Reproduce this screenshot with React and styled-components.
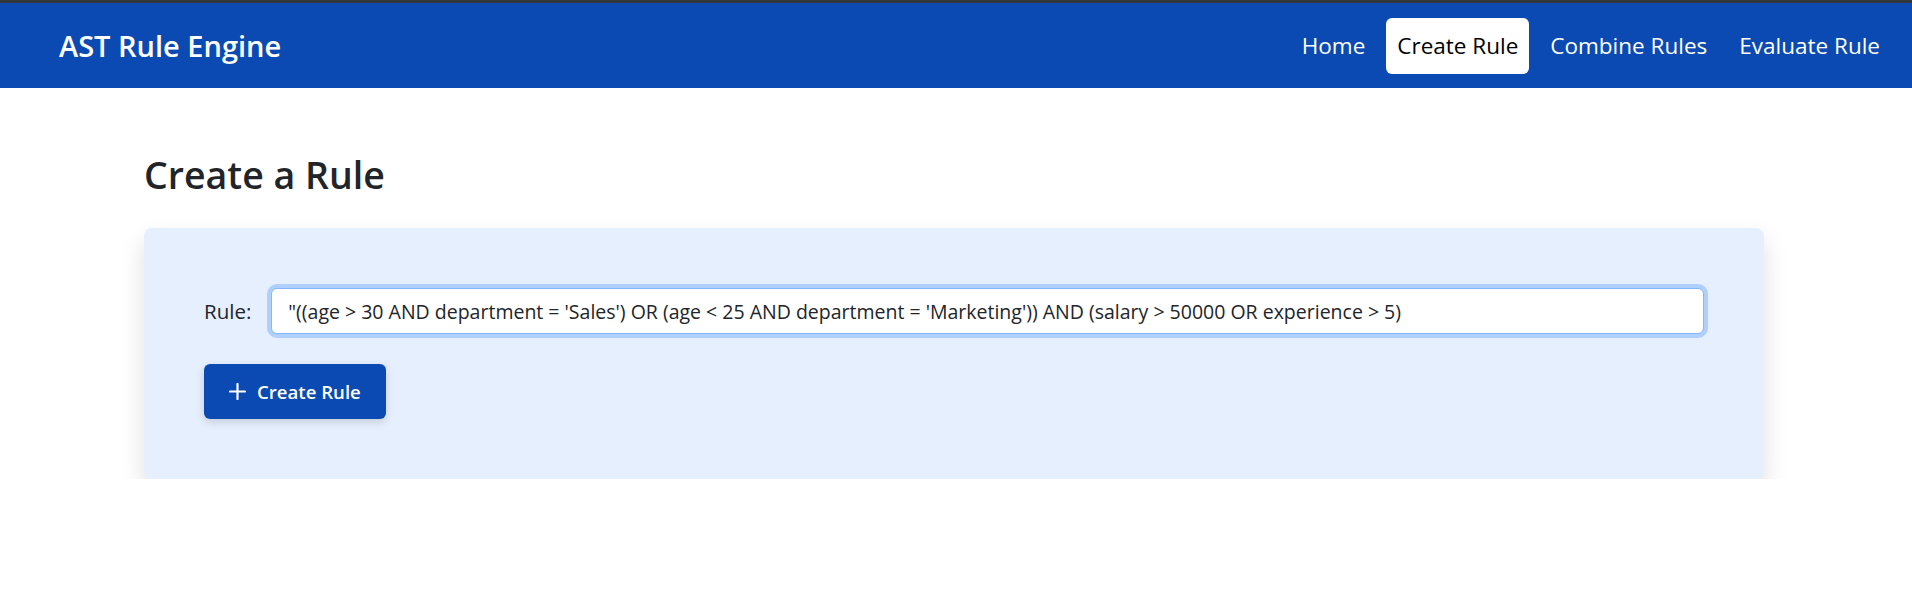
import React, { useEffect, useRef } from "react";
import styled, { createGlobalStyle } from "styled-components";

const GlobalStyle = createGlobalStyle`
  html, body { margin: 0; padding: 0; background: #ffffff; }
  body {
    font-family: "Open Sans", "Noto Sans", sans-serif;
    color: #212529;
  }
  * { box-sizing: border-box; }
`;

const BLUE = "#0b4ab3";

const NavBar = styled.header`
  display: flex;
  align-items: center;
  justify-content: space-between;
  height: 88px;
  border-top: 3px solid #33373d;
  background: ${BLUE};
  padding: 0 21px 0 59px;
`;

const Brand = styled.div`
  color: #ffffff;
  font-size: 29px;
  font-weight: 600;
`;

const NavList = styled.nav`
  display: flex;
  align-items: center;
  gap: 10px;
`;

const NavLink = styled.a`
  display: block;
  height: 56px;
  line-height: 56px;
  padding: 0 11px;
  border-radius: 6px;
  font-size: 22.5px;
  text-decoration: none;
  cursor: pointer;
  color: ${(p) => (p.$active ? "#000000" : "#ffffff")};
  background: ${(p) => (p.$active ? "#ffffff" : "transparent")};
`;

const Main = styled.main`
  margin: 0 148px 0 144px;
`;

const Title = styled.h1`
  margin: 64px 0 31px;
  font-size: 37.5px;
  line-height: 1.2;
  font-weight: 600;
  color: #212529;
`;

const Card = styled.section`
  background: #e6effd;
  border-radius: 8px;
  padding: 60px;
  box-shadow: 0 12px 24px rgba(0, 0, 0, 0.13);
`;

const FormRow = styled.div`
  display: flex;
  align-items: center;
  gap: 20px;
`;

const Label = styled.label`
  font-size: 20.5px;
  color: #212529;
`;

const RuleInput = styled.input`
  flex: 1;
  height: 46px;
  padding: 0 16px;
  font-family: inherit;
  font-size: 19.5px;
  color: #212529;
  background: #ffffff;
  border: 1px solid #86b7fe;
  border-radius: 6px;
  box-shadow: 0 0 0 4px rgba(13, 110, 253, 0.25);
  outline: none;
  caret-color: #000;
`;

const PrimaryButton = styled.button`
  display: flex;
  align-items: center;
  gap: 11px;
  margin-top: 30px;
  height: 55px;
  padding: 0 25px;
  border: none;
  border-radius: 6px;
  background: ${BLUE};
  color: #ffffff;
  font-family: inherit;
  font-size: 18.6px;
  font-weight: 600;
  box-shadow: 0 3px 8px rgba(0, 0, 0, 0.15);
  cursor: pointer;
`;

const PlusIcon = () => (
  <svg width="17" height="17" viewBox="0 0 17 17" fill="none" aria-hidden="true">
    <path d="M8.5 1v15M1 8.5h15" stroke="#ffffff" strokeWidth="2.2" strokeLinecap="round" />
  </svg>
);

const RULE =
  "\"((age > 30 AND department = 'Sales') OR (age < 25 AND department = 'Marketing')) AND (salary > 50000 OR experience > 5)";

export default function App() {
  const ref = useRef(null);
  useEffect(() => {
    const el = ref.current;
    if (el) {
      el.focus();
      el.setSelectionRange(RULE.length, RULE.length);
    }
  }, []);

  const links = ["Home", "Create Rule", "Combine Rules", "Evaluate Rule"];

  return (
    <>
      <GlobalStyle />
      <NavBar>
        <Brand>AST Rule Engine</Brand>
        <NavList>
          {links.map((l) => (
            <NavLink key={l} $active={l === "Create Rule"}>
              {l}
            </NavLink>
          ))}
        </NavList>
      </NavBar>
      <Main>
        <Title>Create a Rule</Title>
        <Card>
          <FormRow>
            <Label htmlFor="rule">Rule:</Label>
            <RuleInput id="rule" ref={ref} defaultValue={RULE} />
          </FormRow>
          <PrimaryButton type="button">
            <PlusIcon />
            Create Rule
          </PrimaryButton>
        </Card>
      </Main>
    </>
  );
}
